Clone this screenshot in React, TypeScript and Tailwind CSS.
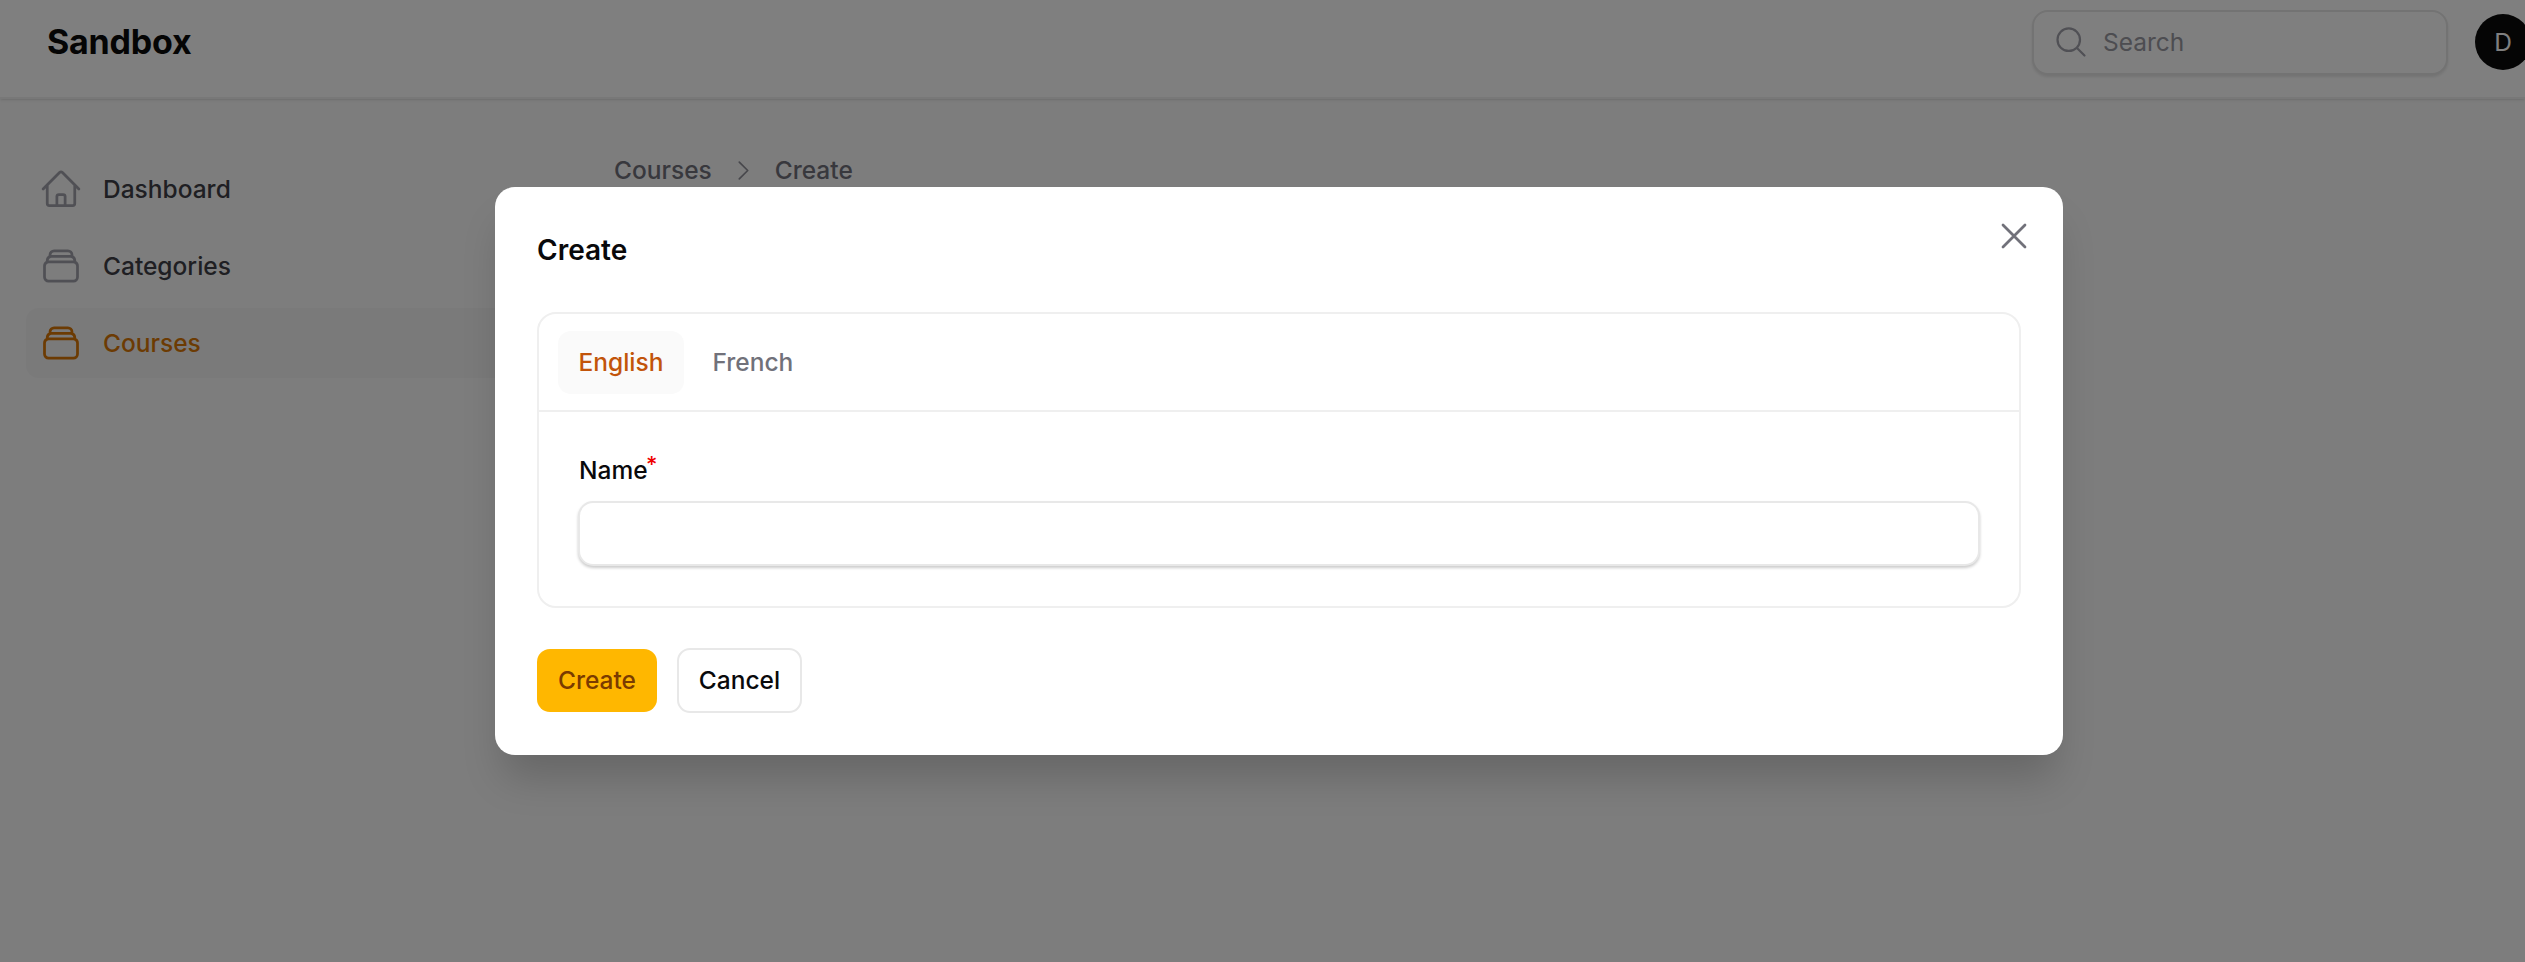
import React from "react";
import { HiOutlineHome, HiOutlineRectangleStack, HiOutlineMagnifyingGlass, HiOutlineXMark, HiOutlineChevronRight } from "react-icons/hi2";

const nav = [
  { label: "Dashboard", Icon: HiOutlineHome, active: false },
  { label: "Categories", Icon: HiOutlineRectangleStack, active: false },
  { label: "Courses", Icon: HiOutlineRectangleStack, active: true },
];

export default function App() {
  return (
    <div className="relative h-[962px] w-full overflow-hidden bg-[#fafafa] font-['Inter',sans-serif] text-[24.5px] font-[450] leading-[35px] text-[#09090b]">
      <header className="flex h-[99px] items-center justify-between border-b-2 border-[#f0f0f0] bg-white pb-[13px] pl-[47px] shadow-sm">
        <div className="text-[34px] font-bold leading-[40px] tracking-[-0.2px] text-[#0a0a0a]">Sandbox</div>
        <div className="mr-[-6px] flex items-center gap-[27px]">
          <div className="flex h-[65px] w-[416px] items-center gap-[14px] rounded-[16px] border-2 border-[#e6e6e6] bg-white pl-[19px] shadow-[0_2px_3px_rgba(0,0,0,0.1)]">
            <HiOutlineMagnifyingGlass className="h-[36px] w-[36px] text-[#a1a1aa]" />
            <span className="font-normal text-[#9a9aa3]">Search</span>
          </div>
          <div className="flex h-[56px] w-[56px] shrink-0 items-center justify-center rounded-full bg-[#0a0a0a] font-normal text-white">D</div>
        </div>
      </header>
      <div className="flex">
        <aside className="flex w-[560px] shrink-0 flex-col gap-[7px] pl-[26px] pr-[20px] pt-[55px]">
          {nav.map(({ label, Icon, active }) => (
            <div key={label} className={`flex h-[70px] items-center gap-[20px] rounded-[13px] pl-[13px] ${active ? "bg-[#f4f4f5] text-[#d97706]" : "text-[#3f3f46]"}`}>
              <Icon className={`h-[44px] w-[44px] shrink-0 ${active ? "text-[#d97706]" : "text-[#a1a1aa]"}`} />
              <span>{label}</span>
            </div>
          ))}
        </aside>
        <main className="pl-[54px] pt-[54px]">
          <nav className="flex items-center text-[#71717a]">
            <span>Courses</span>
            <HiOutlineChevronRight className="mx-[18px] h-[27px] w-[27px] text-[#8f8f98]" />
            <span>Create</span>
          </nav>
        </main>
      </div>

      <div className="absolute inset-0 flex items-start bg-black/50 pl-[495px] pt-[187px]">
        <div className="relative flex h-[568px] w-[1568px] flex-col rounded-[20px] bg-white px-[42px] pb-[42px] pt-[44px] shadow-[0_30px_40px_-8px_rgba(0,0,0,0.18)]">
          <HiOutlineXMark className="absolute right-[27px] top-[27px] h-[44px] w-[44px] text-[#71717a]" />
          <h2 className="text-[28px] font-semibold leading-[38px] text-[#09090b]">Create</h2>
          <section className="mt-[43px] flex h-[297px] flex-col rounded-[19px] border-2 border-[#efefef] bg-white">
            <div className="flex h-[98px] items-start gap-[8px] border-b-2 border-[#efefef] pl-[19px] pt-[17px]">
              <div className="flex h-[63px] items-center rounded-[13px] bg-[#fafafa] px-[20.5px] text-[#c2540a]">English</div>
              <div className="flex h-[63px] items-center rounded-[13px] px-[20.5px] text-[#71717a]">French</div>
            </div>
            <div className="px-[39px] pt-[41px]">
              <label className="relative block pl-[1px]">
                Name<span className="absolute left-[68px] top-[-6px] text-[22px] text-[#ef0000]">*</span>
              </label>
              <div className="mt-[13px] h-[65px] rounded-[15px] border-2 border-[#e8e8e8] bg-white shadow-[0_2px_3px_rgba(0,0,0,0.2)]" />
            </div>
          </section>
          <div className="mt-[40px] flex items-center gap-[20px]">
            <button className="flex h-[63px] w-[120px] items-center justify-center rounded-[13px] bg-[#ffb700] text-[#7a3b00]">Create</button>
            <button className="flex h-[65px] w-[125px] items-center justify-center rounded-[13px] border-2 border-[#e8e8e8] bg-white text-[#09090b]">Cancel</button>
          </div>
        </div>
      </div>
    </div>
  );
}
